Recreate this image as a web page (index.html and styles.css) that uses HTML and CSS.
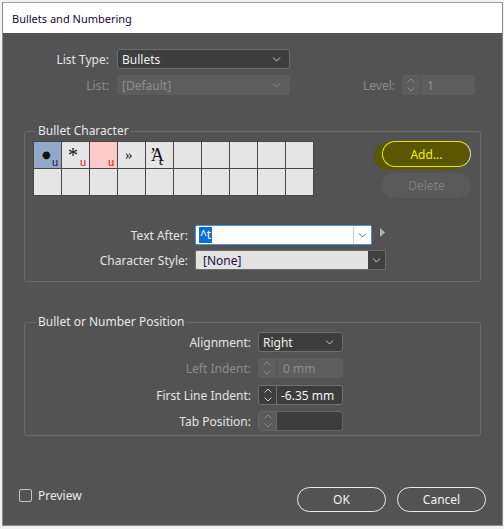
FILE: index.html
```html
<!DOCTYPE html>
<html>
<head>
<meta charset="utf-8">
<link rel="stylesheet" href="styles.css">
</head>
<body>
<div class="dialog">
  <div class="titlebar">Bullets and Numbering</div>
  <div class="main">
    <div class="row row-first">
      <span class="label w106">List Type:</span>
      <div class="select dark w173"><span class="val">Bullets</span><svg class="chev" width="9" height="5" viewBox="0 0 9 5"><path d="M1 0.5 L4.5 4 L8 0.5" fill="none" stroke="#c8c8c8" stroke-width="1"/></svg></div>
    </div>
    <div class="row row-second">
      <span class="label w106 dis">List:</span>
      <div class="select disabled w173"><span class="val">[Default]</span><svg class="chev" width="9" height="5" viewBox="0 0 9 5"><path d="M1 0.5 L4.5 4 L8 0.5" fill="none" stroke="#8a8a8a" stroke-width="1"/></svg></div>
      <span class="label w105 dis">Level:</span>
      <div class="spinner disabled w73">
        <span class="arrows"><svg width="10" height="16" viewBox="0 0 10 16"><path d="M1.5 5.5 L5 2 L8.5 5.5 M1.5 10.5 L5 14 L8.5 10.5" fill="none" stroke="#8a8a8a" stroke-width="1"/></svg></span>
        <span class="val">1</span>
      </div>
    </div>

    <fieldset class="group g1">
      <legend>Bullet Character</legend>
      <div class="charrow">
        <div class="chargrid">
          <div class="cell sel"><span class="g bullet">●</span><span class="u">u</span></div>
          <div class="cell"><span class="g star">*</span><span class="u red">u</span></div>
          <div class="cell pink"><span class="u red">u</span></div>
          <div class="cell"><span class="g raq">»</span></div>
          <div class="cell"><span class="g aog">’Ą</span></div>
          <div class="cell"></div><div class="cell"></div><div class="cell"></div><div class="cell"></div><div class="cell"></div>
          <div class="cell"></div><div class="cell"></div><div class="cell"></div><div class="cell"></div><div class="cell"></div>
          <div class="cell"></div><div class="cell"></div><div class="cell"></div><div class="cell"></div><div class="cell"></div>
        </div>
        <div class="btncol">
          <div class="pill add">Add...</div>
          <div class="pill del">Delete</div>
        </div>
      </div>
      <div class="row row-ta">
        <span class="label w163">Text After:</span>
        <div class="combo w177"><span class="val"><span class="selected">^t</span></span><span class="cbtn"><svg width="9" height="5" viewBox="0 0 9 5"><path d="M1 0.5 L4.5 4 L8 0.5" fill="none" stroke="#666" stroke-width="1"/></svg></span></div>
        <svg class="tri" width="5" height="9" viewBox="0 0 5 9"><path d="M0 0 L5 4.5 L0 9 Z" fill="#b4b4b4"/></svg>
      </div>
      <div class="row row-cs">
        <span class="label w163">Character Style:</span>
        <div class="lightsel w191"><span class="val">[None]</span><span class="dbtn"><svg width="9" height="5" viewBox="0 0 9 5"><path d="M1 0.5 L4.5 4 L8 0.5" fill="none" stroke="#d0d0d0" stroke-width="1"/></svg></span></div>
      </div>
    </fieldset>

    <fieldset class="group g2">
      <legend>Bullet or Number Position</legend>
      <div class="row pr1">
        <span class="label w226">Alignment:</span>
        <div class="select dark w85"><span class="val">Right</span><svg class="chev" width="9" height="5" viewBox="0 0 9 5"><path d="M1 0.5 L4.5 4 L8 0.5" fill="none" stroke="#c8c8c8" stroke-width="1"/></svg></div>
      </div>
      <div class="row pr2">
        <span class="label w226 dis">Left Indent:</span>
        <div class="spinner disabled w85">
          <span class="arrows"><svg width="10" height="16" viewBox="0 0 10 16"><path d="M1.5 5.5 L5 2 L8.5 5.5 M1.5 10.5 L5 14 L8.5 10.5" fill="none" stroke="#8a8a8a" stroke-width="1"/></svg></span>
          <span class="val">0 mm</span>
        </div>
      </div>
      <div class="row pr3">
        <span class="label w226">First Line Indent:</span>
        <div class="spinner active w85">
          <span class="arrows"><svg width="10" height="16" viewBox="0 0 10 16"><path d="M1.5 5.5 L5 2 L8.5 5.5 M1.5 10.5 L5 14 L8.5 10.5" fill="none" stroke="#cfcfcf" stroke-width="1"/></svg></span>
          <span class="val">-6.35 mm</span>
        </div>
      </div>
      <div class="row pr4">
        <span class="label w226">Tab Position:</span>
        <div class="spinner half w85">
          <span class="arrows"><svg width="10" height="16" viewBox="0 0 10 16"><path d="M1.5 5.5 L5 2 L8.5 5.5 M1.5 10.5 L5 14 L8.5 10.5" fill="none" stroke="#8a8a8a" stroke-width="1"/></svg></span>
          <span class="val"></span>
        </div>
      </div>
    </fieldset>

    <div class="footer">
      <span class="check"></span><span class="preview">Preview</span>
      <div class="pill ok">OK</div>
      <div class="pill cancel">Cancel</div>
    </div>
  </div>
</div>
</body>
</html>
```

FILE: styles.css
```css
html, body {
  margin: 0;
  padding: 0;
}
body {
  background: #f2f2f2;
  width: 504px;
  height: 529px;
  overflow: hidden;
  font-family: "Segoe UI", "Noto Sans", sans-serif;
  font-size: 12px;
}
.dialog {
  margin: 2px 0 0 2px;
  width: 501px;
  height: 524px;
  box-sizing: border-box;
  border: 1px solid #8c8c8c;
  border-top-color: #a0a0a0;
  background: #535353;
  display: flex;
  flex-direction: column;
}
.titlebar {
  height: 30px;
  background: #ffffff;
  color: #180a28;
  display: flex;
  align-items: center;
  padding-left: 9px;
  font-size: 11px;
  flex: none;
}
.main {
  flex: 1;
  display: flex;
  flex-direction: column;
  color: #e4e4e4;
  font-size: 12px;
}
.row {
  display: flex;
  align-items: center;
  height: 20px;
}
.label {
  text-align: right;
  margin-right: 8px;
  white-space: nowrap;
  flex: none;
}
.label.dis { color: #8c8c8c; }
.w105 { width: 105px; margin-right: 7px; }
.w106 { width: 106px; }
.w163 { width: 163px; margin-right: 7px; }
.w226 { width: 226px; margin-right: 7px; }
.w173 { width: 173px; }
.w73 { width: 73px; }
.w85 { width: 85px; }
.w177 { width: 177px; }
.w191 { width: 191px; }

.row-first { margin-top: 16px; }
.row-second { margin-top: 6px; }

.select {
  height: 20px;
  box-sizing: border-box;
  border-radius: 3px;
  display: flex;
  align-items: center;
  justify-content: space-between;
  padding: 0 8px 0 4px;
  flex: none;
}
.select.dark {
  background: #3d3d3d;
  border: 1px solid #6e6e6e;
  color: #f0f0f0;
}
.select.disabled {
  background: #5d5d5d;
  border: 1px solid #5d5d5d;
  color: #8e8e8e;
}
.spinner {
  height: 20px;
  box-sizing: border-box;
  border-radius: 3px;
  display: flex;
  align-items: stretch;
  flex: none;
  overflow: hidden;
}
.spinner .arrows {
  width: 18px;
  display: flex;
  align-items: center;
  justify-content: center;
  flex: none;
}
.spinner .val {
  flex: 1;
  display: flex;
  align-items: center;
  padding-left: 6px;
}
.spinner.disabled {
  background: #5d5d5d;
  color: #8e8e8e;
}
.spinner.disabled .arrows { border-right: 1px solid #535353; }
.spinner.active {
  border: 1px solid #707070;
  background: #3d3d3d;
  color: #f4f4f4;
}
.spinner.active .arrows {
  background: #3d3d3d;
  border-right: 1px solid #707070;
  width: 17px;
}
.spinner.active .val { padding-left: 4px; }
.spinner.half {
  border: 1px solid #666;
  background: #3d3d3d;
}
.spinner.half .arrows {
  background: #5b5b5b;
  border-right: 1px solid #666;
  width: 17px;
}

.group {
  border: 1px solid #6a6a6a;
  border-radius: 3px;
  margin: 0 0 0 21px;
  width: 457px;
  box-sizing: border-box;
  padding: 0;
  min-width: 0;
}
.group legend {
  margin-left: 11px;
  padding: 0 2px;
  color: #e8e8e8;
  line-height: 16px;
}
.g1 { margin-top: 28px; padding-bottom: 11px; }
.g2 { margin-top: 32px; padding-bottom: 4px; }

.charrow {
  display: flex;
  margin-top: 2px;
}
.chargrid {
  margin-left: 8px;
  display: grid;
  grid-template-columns: repeat(10, 27px);
  grid-auto-rows: 26px;
  gap: 1px;
  padding: 1px;
  background: #474747;
  align-self: flex-start;
}
.cell {
  background: #e6e6e6;
  position: relative;
  font-family: "Liberation Serif", serif;
  color: #111;
}
.cell.sel { background: #93a9c9; }
.cell.pink { background: #ffcaca; }
.cell .g { position: absolute; line-height: 1; }
.cell .bullet { font-size: 10px; left: 8px; top: 8px; font-family: "DejaVu Sans", sans-serif; }
.cell .star { font-size: 20px; left: 6px; top: 3px; }
.cell .raq { font-size: 15px; left: 7px; top: 6px; }
.cell .aog { font-size: 18px; left: 4px; top: 4px; letter-spacing: -5px; }
.cell .u {
  position: absolute;
  right: 3px;
  bottom: 1px;
  font-family: "Liberation Sans", sans-serif;
  font-size: 11px;
  line-height: 10px;
  color: #1a1530;
}
.cell .u.red { color: #e21010; }

.btncol {
  margin-left: auto;
  margin-right: 9px;
  display: flex;
  flex-direction: column;
  gap: 6px;
}
.pill {
  width: 89px;
  height: 25px;
  box-sizing: border-box;
  border-radius: 13px;
  display: flex;
  align-items: center;
  justify-content: center;
  font-size: 12px;
}
.pill.add {
  position: relative;
  height: 26px;
  background: #5b5600;
  border: 1px solid #e6e600;
  border-right-color: #dcdcdc;
  color: #f4f400;
  box-shadow: -7px 2px 0 1px #5b5600;
}
.pill.del {
  background: #5a5a5a;
  color: #7e7e7e;
}

.row-ta { margin-top: 27px; }
.row-cs { margin-top: 5px; }
.combo {
  height: 20px;
  box-sizing: border-box;
  border: 1px solid #4b8fd6;
  border-radius: 2px;
  background: #fff;
  display: flex;
  align-items: stretch;
  flex: none;
}
.combo .val {
  flex: 1;
  display: flex;
  align-items: center;
  padding-left: 3px;
  font-size: 12px;
}
.combo .selected {
  background: #0a6fd6;
  color: #fff;
  padding: 0 1px;
  line-height: 16px;
}
.combo .cbtn {
  width: 17px;
  border-left: 1px solid #cfcfcf;
  display: flex;
  align-items: center;
  justify-content: center;
  background: #fff;
}
.tri { margin-left: 8px; margin-top: -6px; }
.lightsel {
  height: 20px;
  box-sizing: border-box;
  background: #e2e2e2;
  border: 1px solid #6d6d6d;
  border-radius: 2px;
  display: flex;
  align-items: stretch;
  flex: none;
}
.lightsel .val {
  flex: 1;
  display: flex;
  align-items: center;
  padding-left: 7px;
  color: #1c1040;
  font-size: 12px;
}
.lightsel .dbtn {
  width: 17px;
  background: #404040;
  display: flex;
  align-items: center;
  justify-content: center;
}

.pr1 { margin-top: 2px; }
.pr2 { margin-top: 6px; }
.pr3 { margin-top: 7px; }
.pr4 { margin-top: 6px; }

.footer {
  margin-top: auto;
  display: flex;
  align-items: center;
  padding: 0 16px 13px 16px;
}
.check {
  width: 11px;
  height: 11px;
  border: 1px solid #c4c4c4;
  border-radius: 2px;
  flex: none;
  margin-top: -8px;
}
.preview {
  margin-left: 6px;
  color: #e8e8e8;
  margin-top: -8px;
}
.pill.ok, .pill.cancel {
  border: 1px solid #eaeaea;
  color: #f2f2f2;
  height: 25px;
}
.pill.ok { margin-left: auto; }
.pill.cancel { margin-left: 11px; }
```
